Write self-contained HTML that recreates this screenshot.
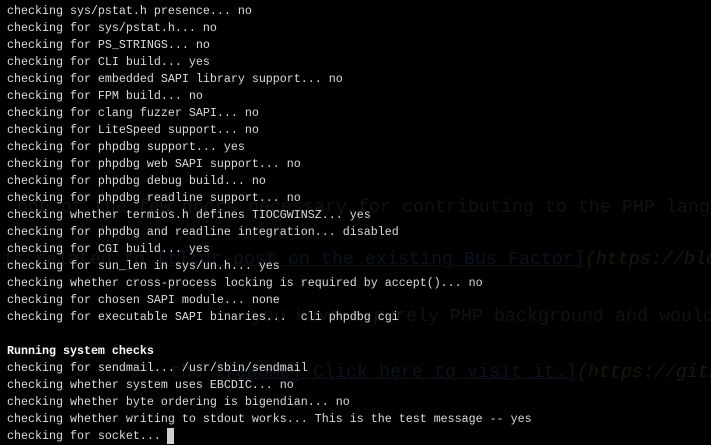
<!DOCTYPE html>
<html><head><style>
html,body{margin:0;padding:0;background:#000;width:711px;height:445px;overflow:hidden;position:relative;}
.g{position:absolute;font:18.33px/1 "Liberation Mono",monospace;color:#121212;white-space:pre;}
.g .l{color:#0c1220;text-decoration:underline;}
.g .i{color:#1a170b;font-style:italic;}
.t{position:absolute;left:7px;top:3px;font:11.67px/17px "Liberation Mono",monospace;color:#dcdcdc;white-space:pre;}
.t b{color:#fff;}
.c{position:absolute;left:167px;top:428px;width:7px;height:16px;background:#cfcfcf;}
.clip{position:absolute;left:0;top:0;width:711px;height:445px;overflow:hidden;}
</style></head><body>
<div class="clip">
<div class="g" style="top:199px;left:17px">one of the few doors necessary for contributing to the PHP language</div>
<div class="g" style="top:251px;left:-31px">It is related to <span class="l">[tl;dr post on the existing Bus Factor]</span><span class="i">(https://blog)</span></div>
<div class="g" style="top:308px;left:252px">you have a purely PHP background and would</div>
<div class="g" style="top:364px;left:170px">the <span class="l">[readme] Click here to visit it.]</span><span class="i">(https://github)</span></div>
</div>
<div class="t">checking sys/pstat.h presence... no
checking for sys/pstat.h... no
checking for PS_STRINGS... no
checking for CLI build... yes
checking for embedded SAPI library support... no
checking for FPM build... no
checking for clang fuzzer SAPI... no
checking for LiteSpeed support... no
checking for phpdbg support... yes
checking for phpdbg web SAPI support... no
checking for phpdbg debug build... no
checking for phpdbg readline support... no
checking whether termios.h defines TIOCGWINSZ... yes
checking for phpdbg and readline integration... disabled
checking for CGI build... yes
checking for sun_len in sys/un.h... yes
checking whether cross-process locking is required by accept()... no
checking for chosen SAPI module... none
checking for executable SAPI binaries...  cli phpdbg cgi

<b>Running system checks</b>
checking for sendmail... /usr/sbin/sendmail
checking whether system uses EBCDIC... no
checking whether byte ordering is bigendian... no
checking whether writing to stdout works... This is the test message -- yes
checking for socket... </div>
<div class="c"></div>
</body></html>
